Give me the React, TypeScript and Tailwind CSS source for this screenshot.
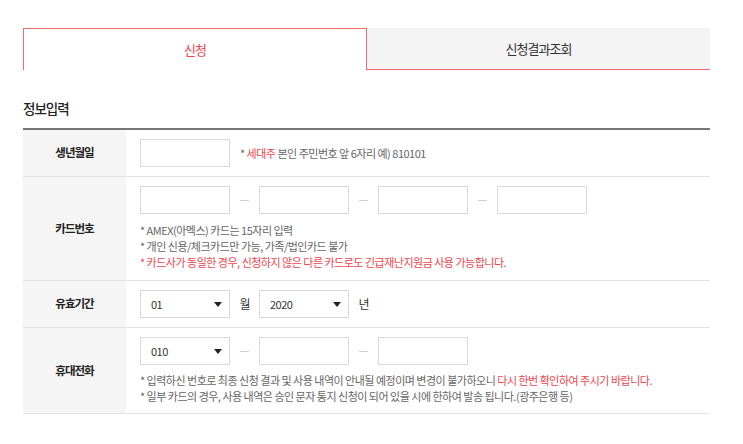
import React from "react";

const font = { fontFamily: '"Noto Sans CJK KR", "Noto Sans", sans-serif' };

const Input = () => <div className="w-[90px] h-[28px] border border-[#d9d9d9] bg-white shrink-0" />;

const Dash = () => (
  <span className="w-[29px] flex items-center justify-center shrink-0">
    <span className="w-[9px] h-px bg-[#cfcfcf]" />
  </span>
);

const Unit = ({ children }: { children: React.ReactNode }) => (
  <span className="w-[29px] text-center text-[12px] tracking-[-1px] text-[#333] shrink-0">{children}</span>
);

const Select = ({ value }: { value: string }) => (
  <div className="w-[90px] h-[28px] border border-[#d9d9d9] bg-white shrink-0 flex items-center justify-between pl-[10px] pr-[7px]">
    <span className="text-[11px] tracking-[-0.5px] text-[#333]">{value}</span>
    <svg width="8" height="5" viewBox="0 0 8 5">
      <path d="M0 0h8L4 5z" fill="#222" />
    </svg>
  </div>
);

const Row = ({ label, children, pb = "pb-[9px]" }: { label: string; children: React.ReactNode; pb?: string }) => (
  <div className="flex border-b border-[#e1e1e1]">
    <div className="w-[103px] shrink-0 bg-[#f5f5f5] flex items-center justify-center text-[11.5px] font-bold tracking-[-1px] text-[#222]">
      {label}
    </div>
    <div className={`flex-1 pl-[14px] pt-[9px] ${pb}`}>{children}</div>
  </div>
);

const Note = ({ children, red }: { children: React.ReactNode; red?: boolean }) => (
  <p className={`text-[11px] leading-[16px] tracking-[-0.5px] ${red ? "text-[#f0454c]" : "text-[#666]"}`}>{children}</p>
);

export default function App() {
  return (
    <div className="w-[743px] h-[444px] bg-white pl-[23px] pr-[33px] pt-[28px]" style={font}>
      <div className="flex h-[42px]">
        <div className="w-[344px] border border-b-0 border-[#f26b6b] bg-white flex items-center justify-center text-[13px] tracking-[-1px] text-[#f0454c]">
          신청
        </div>
        <div className="flex-1 bg-[#f4f4f4] border-b border-[#f26b6b] flex items-center justify-center text-[13px] tracking-[-1px] text-[#333]">
          신청결과조회
        </div>
      </div>

      <h2 className="mt-[28px] mb-[10px] text-[13.5px] leading-[20px] font-medium tracking-[-1px] text-[#222]">정보입력</h2>

      <div className="border-t-2 border-[#777]">
        <Row label="생년월일">
          <div className="flex items-center">
            <Input />
            <span className="ml-[10px] text-[11px] tracking-[-0.5px] text-[#666]">
              * <span className="text-[#f0454c]">세대주</span> 본인 주민번호 앞 6자리 예) 810101
            </span>
          </div>
        </Row>

        <Row label="카드번호" pb="pb-[10px]">
          <div className="flex items-center">
            <Input />
            <Dash />
            <Input />
            <Dash />
            <Input />
            <Dash />
            <Input />
          </div>
          <div className="mt-[8px]">
            <Note>* AMEX(아멕스) 카드는 15자리 입력</Note>
            <Note>* 개인 신용/체크카드만 가능, 가족/법인카드 불가</Note>
            <Note red>* 카드사가 동일한 경우, 신청하지 않은 다른 카드로도 긴급재난지원금 사용 가능합니다.</Note>
          </div>
        </Row>

        <Row label="유효기간">
          <div className="flex items-center">
            <Select value="01" />
            <Unit>월</Unit>
            <Select value="2020" />
            <Unit>년</Unit>
          </div>
        </Row>

        <Row label="휴대전화">
          <div className="flex items-center">
            <Select value="010" />
            <Dash />
            <Input />
            <Dash />
            <Input />
          </div>
          <div className="mt-[7px]">
            <Note>
              * 입력하신 번호로 최종 신청 결과 및 사용 내역이 안내될 예정이며 변경이 불가하오니{" "}
              <span className="text-[#f0454c]">다시 한번 확인하여 주시기 바랍니다.</span>
            </Note>
            <Note>* 일부 카드의 경우, 사용 내역은 승인 문자 통지 신청이 되어 있을 시에 한하여 발송 됩니다.(광주은행 등)</Note>
          </div>
        </Row>
      </div>
    </div>
  );
}
